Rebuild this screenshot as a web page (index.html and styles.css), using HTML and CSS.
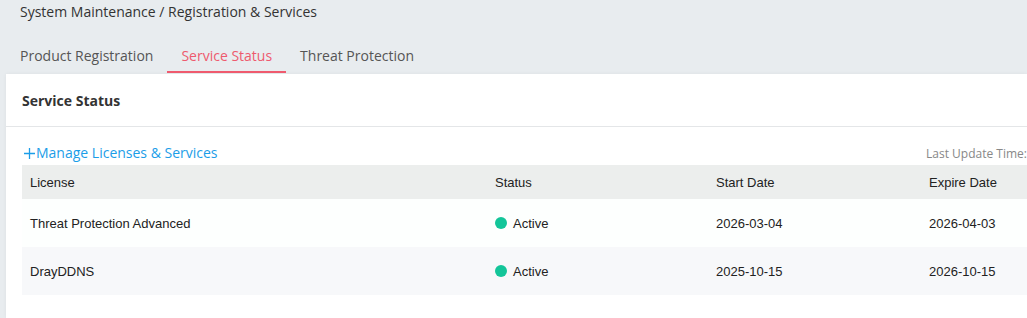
FILE: index.html
```html
<!DOCTYPE html>
<html lang="en">
<head>
    <meta charset="UTF-8">
    <title>Registration &amp; Services</title>
    <link rel="stylesheet" href="styles.css">
</head>
<body>

<div class="breadcrumb">System Maintenance / Registration &amp; Services</div>

<div class="tabs">
    <div class="tab">Product Registration</div>
    <div class="tab active">Service Status</div>
    <div class="tab">Threat Protection</div>
</div>

<div class="card">
    <div class="card-header">Service Status</div>
    <div class="card-body">
        <div class="toolbar">
            <a class="manage-link" href="#">
                <svg class="plus" width="11" height="11" viewBox="0 0 11 11"><path d="M5.5 0V11M0 5.5H11" stroke="currentColor" stroke-width="1.3"/></svg>Manage Licenses &amp; Services
            </a>
            <span class="update-time">Last Update Time:</span>
        </div>
        <table class="license-table">
            <colgroup>
                <col class="col-license">
                <col class="col-status">
                <col class="col-start">
                <col class="col-expire">
            </colgroup>
            <thead>
                <tr>
                    <th>License</th>
                    <th>Status</th>
                    <th>Start Date</th>
                    <th>Expire Date</th>
                </tr>
            </thead>
            <tbody>
                <tr>
                    <td>Threat Protection Advanced</td>
                    <td><span class="dot"></span>Active</td>
                    <td>2026-03-04</td>
                    <td>2026-04-03</td>
                </tr>
                <tr>
                    <td>DrayDDNS</td>
                    <td><span class="dot"></span>Active</td>
                    <td>2025-10-15</td>
                    <td>2026-10-15</td>
                </tr>
            </tbody>
        </table>
    </div>
</div>

</body>
</html>
```

FILE: styles.css
```css
body {
    font-family: 'Open Sans', sans-serif;
    background-color: #e8ecef;
    margin: 0;
    padding: 0;
    overflow: hidden;
    color: #333;
}
.breadcrumb {
    padding: 1px 0 0 20px;
    height: 23px;
    line-height: 22px;
    font-size: 14px;
    color: #333;
}
.tabs {
    display: flex;
    margin-top: 15px;
    padding-left: 6px;
}
.tab {
    padding: 0 14px;
    height: 32px;
    line-height: 34px;
    font-size: 14px;
    color: #555;
    border-bottom: 2px solid transparent;
}
.tab.active {
    color: #ee5a6e;
    border-bottom-color: #ef5a6e;
}
.card {
    margin: 1px 0 0 6px;
    height: calc(100vh - 74px);
    background-color: #fff;
    box-shadow: 0 0 4px rgba(0, 0, 0, 0.05);
}
.card-header {
    height: 50px;
    padding-top: 2px;
    line-height: 50px;
    padding-left: 16px;
    font-size: 14px;
    font-weight: bold;
    color: #333;
    border-bottom: 1px solid #e4e6e8;
}
.card-body {
    padding-left: 16px;
}
.toolbar {
    display: flex;
    justify-content: space-between;
    align-items: flex-end;
    height: 38px;
}
.manage-link {
    display: flex;
    align-items: center;
    color: #1b9de8;
    text-decoration: none;
    font-size: 14px;
    line-height: 20px;
    padding: 0 0 2px 2px;
}
.plus {
    margin-right: 1px;
}
.update-time {
    font-size: 12px;
    color: #888;
    line-height: 16px;
    padding-bottom: 3px;
    white-space: nowrap;
}
.license-table {
    border-collapse: collapse;
    table-layout: fixed;
    width: 100%;
    font-family: 'Liberation Sans', Arial, sans-serif;
    font-size: 13px;
    color: #222;
}
.col-license { width: 465px; }
.col-status { width: 221px; }
.col-start { width: 213px; }
th {
    text-align: left;
    font-weight: normal;
    background-color: #eceeed;
    height: 34px;
    padding: 0 8px;
}
td {
    height: 48px;
    padding: 0 8px;
}
tbody tr:nth-child(1) {
    background-color: #fdfffe;
}
tbody tr:nth-child(2) {
    background-color: #f7f8fa;
}
.dot {
    display: inline-block;
    width: 12px;
    height: 12px;
    border-radius: 50%;
    background-color: #13c599;
    margin-right: 6px;
    vertical-align: -1px;
}
```
